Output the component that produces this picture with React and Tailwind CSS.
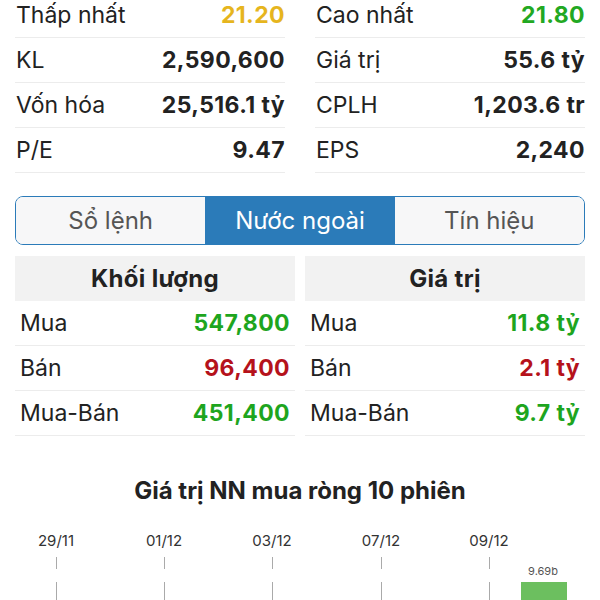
import React from "react";

const top = [
  [
    ["Thấp nhất", "21.20", "text-[#e6b51e]"],
    ["KL", "2,590,600", ""],
    ["Vốn hóa", "25,516.1 tỷ", ""],
    ["P/E", "9.47", ""],
  ],
  [
    ["Cao nhất", "21.80", "text-[#22a822]"],
    ["Giá trị", "55.6 tỷ", ""],
    ["CPLH", "1,203.6 tr", ""],
    ["EPS", "2,240", ""],
  ],
];

const nn = [
  {
    title: "Khối lượng",
    rows: [
      ["Mua", "547,800", "text-[#1ea51e]"],
      ["Bán", "96,400", "text-[#b5121b]"],
      ["Mua-Bán", "451,400", "text-[#1ea51e]"],
    ],
  },
  {
    title: "Giá trị",
    rows: [
      ["Mua", "11.8 tỷ", "text-[#1ea51e]"],
      ["Bán", "2.1 tỷ", "text-[#b5121b]"],
      ["Mua-Bán", "9.7 tỷ", "text-[#1ea51e]"],
    ],
  },
];

const dates = [
  ["29/11", 56],
  ["01/12", 164],
  ["03/12", 272],
  ["07/12", 381],
  ["09/12", 489],
];

export default function App() {
  return (
    <div className="w-[600px] h-[600px] overflow-hidden bg-white font-['Inter','Liberation_Sans',sans-serif] text-[#222]">
      <div className="-mt-[7px] grid grid-cols-2 gap-x-[30px] px-[15px]">
        {top.map((col, i) => (
          <div key={i} className="flex flex-col">
            {col.map(([l, v, c]) => (
              <div
                key={l}
                className="h-[45px] flex items-center justify-between border-b border-[#ececec] text-[23px]"
              >
                <span className="pl-[1px]">{l}</span>
                <span className={`font-bold tracking-[0.4px] ${c || "text-[#222]"}`}>{v}</span>
              </div>
            ))}
          </div>
        ))}
      </div>

      <div className="mt-[23px] mx-[15px] h-[49px] border-[1.5px] border-[#2b7bb9] rounded-[8px] overflow-hidden grid grid-cols-3 text-[24px]">
        <div className="flex items-center justify-center bg-[#f7f7f8] text-[#555]">Sổ lệnh</div>
        <div className="flex items-center justify-center bg-[#2b7bb9] text-white">Nước ngoài</div>
        <div className="flex items-center justify-center bg-[#f7f7f8] text-[#555]">Tín hiệu</div>
      </div>

      <div className="mt-[11px] grid grid-cols-2 gap-x-[10px] px-[15px]">
        {nn.map((s) => (
          <div key={s.title} className="flex flex-col">
            <div className="h-[45px] bg-[#f2f2f2] flex items-center justify-center font-bold text-[24px] tracking-[0.3px]">
              {s.title}
            </div>
            {s.rows.map(([l, v, c]) => (
              <div
                key={l}
                className="h-[45px] flex items-center justify-between px-[5px] border-b border-[#ececec] text-[23px]"
              >
                <span>{l}</span>
                <span className={`font-bold tracking-[0.4px] ${c}`}>{v}</span>
              </div>
            ))}
          </div>
        ))}
      </div>

      <div className="mt-[43px] text-center font-bold text-[24px] leading-[24px] text-[#222]">
        Giá trị NN mua ròng 10 phiên
      </div>

      <div className="relative mt-[16px] h-[100px]">
        {dates.map(([d, x]) => (
          <React.Fragment key={d}>
            <span
              className="absolute top-[12px] -translate-x-1/2 text-[15px] leading-[20px] text-[#333]"
              style={{ left: x }}
            >
              {d}
            </span>
            <div className="absolute top-[38px] h-[12px] w-px bg-[#aaa]" style={{ left: x }} />
            <div className="absolute top-[63px] h-[20px] w-px bg-[#aaa]" style={{ left: x }} />
          </React.Fragment>
        ))}
        <span className="absolute left-[543px] top-[45px] -translate-x-1/2 text-[11px] leading-[14px] text-[#555]">
          9.69b
        </span>
        <div className="absolute left-[521px] top-[63px] w-[46px] h-[40px] bg-[#6cbf5f]" />
      </div>
    </div>
  );
}
